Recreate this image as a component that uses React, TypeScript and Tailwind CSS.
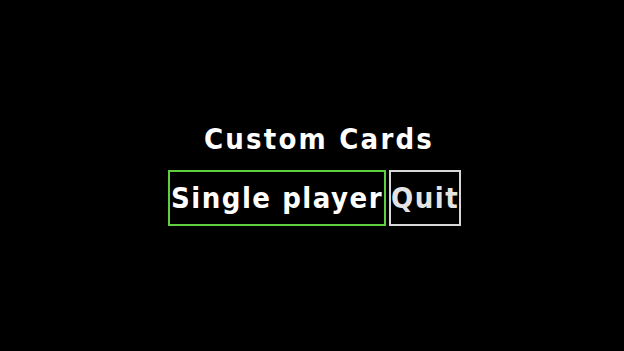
export default function App() {
  return (
    <div className="w-[624px] h-[351px] bg-black flex flex-col items-center font-['DejaVu_Sans_Condensed','DejaVu_Sans',sans-serif]">
      <h1 className="mt-[119px] ml-[14px] text-[29px] leading-[40px] font-bold text-white tracking-[2.2px]">Custom Cards</h1>
      <div className="flex gap-[3px] mt-[11px] ml-[5px]">
        <button className="h-[56px] w-[218px] border-2 border-[#5fcf3f] text-white text-[29px] font-bold tracking-[1.5px] leading-none">
          Single player
        </button>
        <button className="h-[56px] w-[72px] border-2 border-[#d8d8d8] text-[#e4e4e4] text-[29px] font-bold tracking-[1.5px] leading-none">
          Quit
        </button>
      </div>
    </div>
  )
}
